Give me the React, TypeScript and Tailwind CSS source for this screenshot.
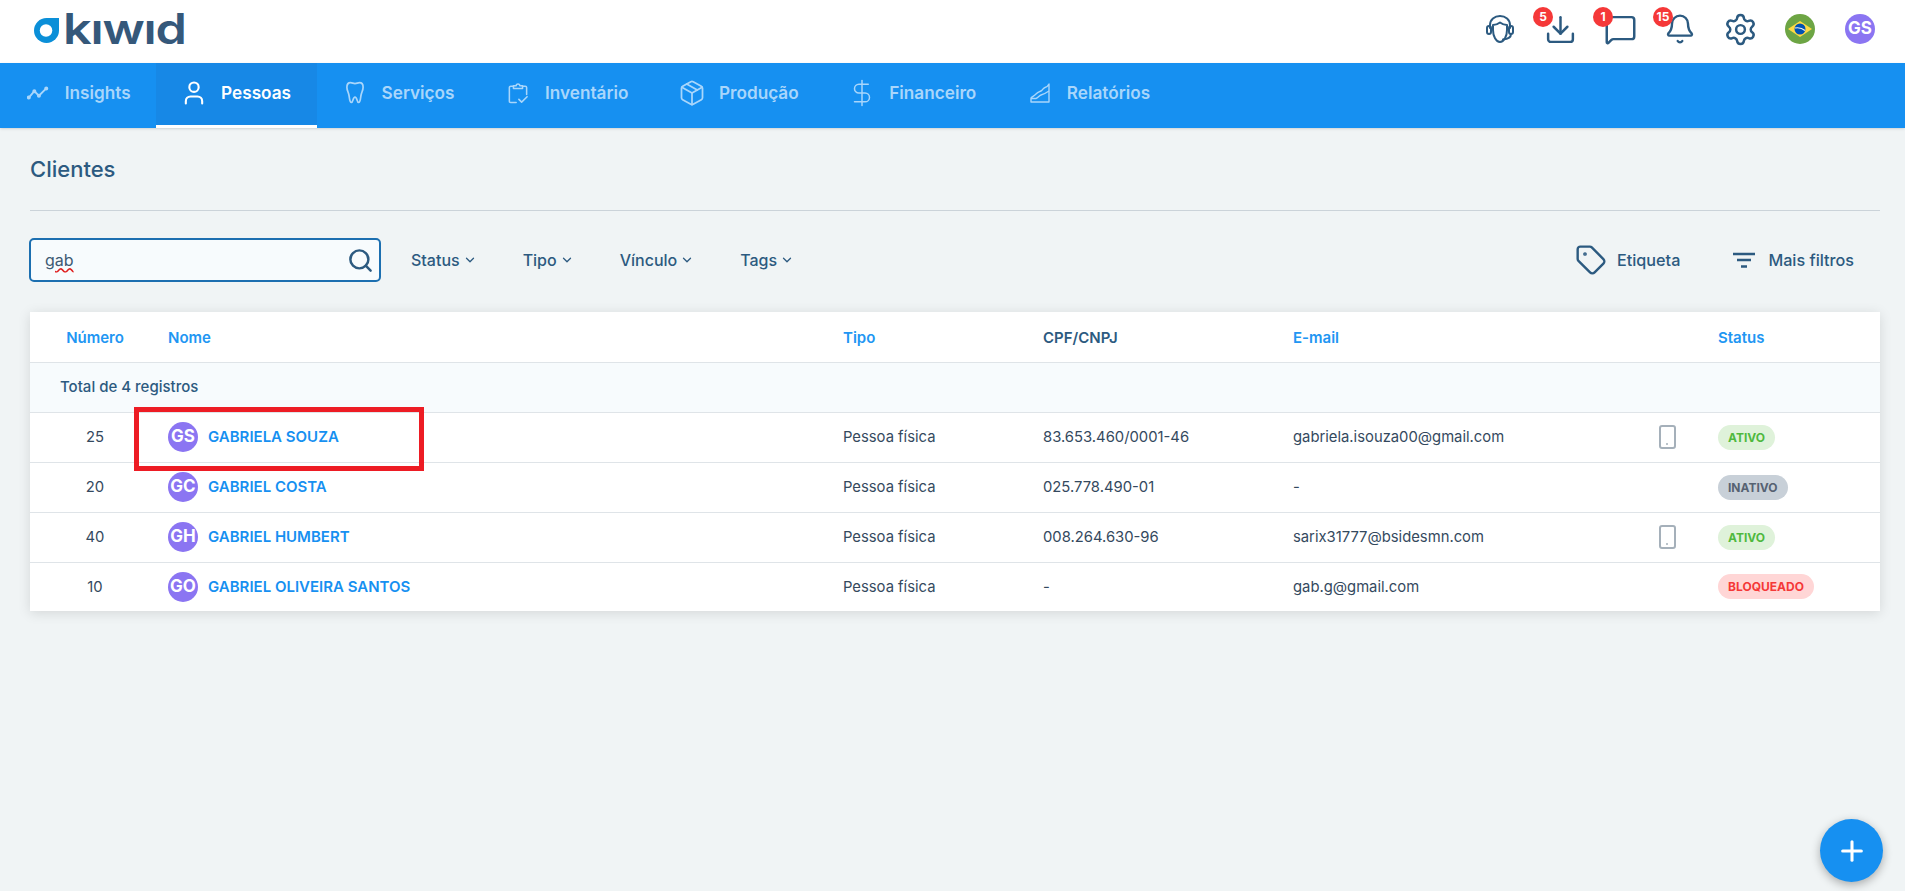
import type { ReactNode } from "react";
import { Bell, ChevronDown, DollarSign, Download, MessageSquare, Package, Plus, Search, Settings, Tag, User } from "lucide-react";

const font = { fontFamily: "Inter, sans-serif" };

function TrendIcon({ className }: { className?: string }) {
  return (
    <svg viewBox="0 0 24 16" fill="none" stroke="currentColor" strokeWidth="2" strokeLinecap="round" strokeLinejoin="round" className={className}>
      <path d="M2 13 8 6l5 5 8-8" />
      <circle cx="2" cy="13" r="1.2" fill="currentColor" />
      <circle cx="8" cy="6" r="1.2" fill="currentColor" />
      <circle cx="13" cy="11" r="1.2" fill="currentColor" />
      <circle cx="21" cy="3" r="1.2" fill="currentColor" />
    </svg>
  );
}

function ToothIcon({ className }: { className?: string }) {
  return (
    <svg viewBox="0 0 20 26" fill="none" stroke="currentColor" strokeWidth="1.9" strokeLinejoin="round" className={className}>
      <path d="M5 1.500c2 0 3 1 5 1s3-1 5-1c2.500 0 4 2 4 5 0 4-2 6-2.500 10-.3 2.500-.8 7-2.500 7-2 0-1.500-6-4-6s-2 6-4 6c-1.700 0-2.200-4.500-2.500-7C3 12.500 1 10.500 1 6.500c0-3 1.500-5 4-5Z" />
    </svg>
  );
}

function ClipboardIcon({ className }: { className?: string }) {
  return (
    <svg viewBox="0 0 22 24" fill="none" stroke="currentColor" strokeWidth="1.700" strokeLinecap="round" strokeLinejoin="round" className={className}>
      <path d="M6 4H3a1.500 1.500 0 0 0-1.500 1.500v15A1.500 1.500 0 0 0 3 22h6" />
      <path d="M16 4h3a1.500 1.500 0 0 1 1.500 1.500V13" />
      <path d="M6 6.500V3.500h3a2 2 0 0 1 4 0h3v3H6Z" />
      <path d="m12 18.500 3 3 6-6" />
    </svg>
  );
}

function ChartIcon({ className }: { className?: string }) {
  return (
    <svg viewBox="0 0 20 20" fill="none" stroke="currentColor" strokeWidth="1.400" strokeLinejoin="round" className={className}>
      <path d="M1 19h18V1c-1 2-2 3-4 3.500-2 .5-2 2.500-4 3.500-2 1-3 1-5 3-2 2-4 3-5 4v4Z" />
      <path d="M1 15.500h5c2-.5 3-3 5-3.500 3-.7 5-2 8-4" />
    </svg>
  );
}

function HeadsetIcon({ className }: { className?: string }) {
  return (
    <svg viewBox="0 0 28 28" fill="none" stroke="currentColor" strokeWidth="2" strokeLinecap="round" strokeLinejoin="round" className={className}>
      <path d="M4 13V10C4 4.500 8.500 1 14 1s10 3.500 10 9v3" />
      <path d="M7 10c3 0 5-1 7-2.500 2 1.500 4 2.500 7 2.500v5c0 6-3 12-7 12s-7-6-7-12v-5Z" />
      <rect x="1" y="11" width="4" height="8" rx="2" />
      <rect x="23" y="11" width="4" height="8" rx="2" />
      <path d="M25 19c0 3-3 5-8 5.500" />
    </svg>
  );
}

function BrazilFlag() {
  return (
    <svg viewBox="0 0 30 30" className="h-[30px] w-[30px]">
      <circle cx="15" cy="15" r="15" fill="#6da544" />
      <path d="M15 7 27 15 15 23 3 15Z" fill="#ffda44" />
      <circle cx="15" cy="15" r="5.500" fill="#0052b4" />
      <path d="M10 14c4-.8 7 0 10 2.500" stroke="#f0f0f0" strokeWidth="1.200" fill="none" />
    </svg>
  );
}

function Logo() {
  return (
    <div className="flex items-center gap-[4px]">
      <svg viewBox="0 0 26 26" className="mt-[3px] h-[25px] w-[25px]">
        <path d="M13 0H26V13A13 13 0 1 1 13 0Z" fill="#0b8fd8" />
        <circle cx="12.500" cy="13" r="6.500" fill="#fff" />
      </svg>
      <span className="origin-left scale-x-[1.2] text-[42px] leading-none font-semibold tracking-[-1px] text-[#35587a]">kıwıd</span>
    </div>
  );
}

function HeaderSlot({ badge, children }: { badge?: number; children: ReactNode }) {
  return (
    <div className="relative flex h-[30px] w-[60px] items-center justify-center">
      {badge !== undefined && (
        <span className="absolute -top-[7px] left-[3px] z-10 flex h-5 w-5 items-center justify-center rounded-full bg-[#f53838] text-xs font-bold text-white">
          {badge}
        </span>
      )}
      {children}
    </div>
  );
}

const tabs = [
  { label: "Insights", icon: <TrendIcon className="h-4 w-[22px]" /> },
  { label: "Pessoas", icon: <User className="h-7 w-7 shrink-0" strokeWidth={1.800} />, active: true },
  { label: "Serviços", icon: <ToothIcon className="h-[24px] w-[18px]" /> },
  { label: "Inventário", icon: <ClipboardIcon className="h-[23px] w-[20px]" /> },
  { label: "Produção", icon: <Package className="h-7 w-7 shrink-0" strokeWidth={1.500} /> },
  { label: "Financeiro", icon: <DollarSign className="h-[30px] w-[30px] shrink-0" strokeWidth={1.200} /> },
  { label: "Relatórios", icon: <ChartIcon className="h-5 w-5" /> },
];

const clients = [
  { id: 25, initials: "GS", name: "GABRIELA SOUZA", doc: "83.653.460/0001-46", email: "gabriela.isouza00@gmail.com", phone: true, status: "ATIVO" },
  { id: 20, initials: "GC", name: "GABRIEL COSTA", doc: "025.778.490-01", email: "-", phone: false, status: "INATIVO" },
  { id: 40, initials: "GH", name: "GABRIEL HUMBERT", doc: "008.264.630-96", email: "sarix31777@bsidesmn.com", phone: true, status: "ATIVO" },
  { id: 10, initials: "GO", name: "GABRIEL OLIVEIRA SANTOS", doc: "-", email: "gab.g@gmail.com", phone: false, status: "BLOQUEADO" },
];

const statusClass: Record<string, string> = {
  ATIVO: "bg-[#dff2da] text-[#4fb93f]",
  INATIVO: "bg-[#c8d0d8] text-[#566272]",
  BLOQUEADO: "bg-[#ffd6d6] text-[#f53838]",
};

export default function App() {
  return (
    <div style={font} className="relative min-h-[891px] overflow-hidden bg-[#f0f4f5] text-[#2c5a80]">
      <header className="flex h-[63px] items-center justify-between bg-white pr-[15px] pb-[5px] pl-[34px]">
        <Logo />
        <div className="flex items-center">
          <HeaderSlot><HeadsetIcon className="h-[28px] w-[28px]" /></HeaderSlot>
          <HeaderSlot badge={5}><Download className="h-[33px] w-[33px] shrink-0" strokeWidth={1.800} /></HeaderSlot>
          <HeaderSlot badge={1}><MessageSquare className="h-[33px] w-[33px] shrink-0" strokeWidth={1.800} /></HeaderSlot>
          <HeaderSlot badge={15}><Bell className="h-8 w-8 shrink-0" strokeWidth={1.800} /></HeaderSlot>
          <HeaderSlot><Settings className="h-[35px] w-[35px] shrink-0" strokeWidth={1.700} /></HeaderSlot>
          <HeaderSlot><BrazilFlag /></HeaderSlot>
          <HeaderSlot>
            <span className="flex h-[30px] w-[30px] items-center justify-center rounded-full bg-[#8b75f2] text-[17px] font-bold text-white">GS</span>
          </HeaderSlot>
        </div>
      </header>

      <nav className="flex h-[65px] bg-[#1690f1] shadow-sm">
        {tabs.map((t) => (
          <a
            key={t.label}
            className={
              t.active
                ? "flex items-center gap-[15px] border-b-[3px] border-white bg-[#1788e6] px-[25.75px] pb-[2px] text-[17.2px] font-semibold text-white"
                : "flex items-center gap-[15px] px-[25.75px] pb-[5px] text-[17.2px] font-semibold text-[#a9d6fb]"
            }
          >
            <span className="flex w-6 justify-center">{t.icon}</span>
            {t.label}
          </a>
        ))}
      </nav>

      <main className="pr-[25px] pl-[30px]">
        <h1 className="flex h-[83px] items-center border-b border-[#cbd3d9] text-[22px] font-medium text-[#2c5a80]">Clientes</h1>

        <div className="mt-[27px] flex h-[44px] items-center justify-between">
          <div className="flex items-center">
            <div className="-ml-px flex h-[44px] w-[352px] items-center justify-between rounded-[5px] border-2 border-[#1c6fb0] bg-[#f7fbfd] pr-[5px] pl-[14px]">
              <span className="text-base text-[#3d5a73] underline decoration-[#e02020] decoration-wavy">gab</span>
              <Search className="h-[27px] w-[27px]" strokeWidth={2.200} />
            </div>
            <div className="ml-[30px] flex items-center gap-[46px] text-base font-medium">
              {["Status", "Tipo", "Vínculo", "Tags"].map((f) => (
                <span key={f} className="flex items-center gap-[3px]">
                  {f}
                  <ChevronDown className="h-3.5 w-3.5" strokeWidth={2.200} />
                </span>
              ))}
            </div>
          </div>
          <div className="flex items-center gap-[52px] pr-[26px] text-[16.2px] font-medium">
            <span className="flex items-center gap-[10px]"><Tag className="h-8 w-8" strokeWidth={1.800} />Etiqueta</span>
            <span className="flex items-center gap-[12px]">
              <svg viewBox="0 0 24 16" className="h-4 w-6" fill="none" stroke="currentColor" strokeWidth="2.500">
                <path d="M1 2h22M5 8h14M9 14.500h6" />
              </svg>
              Mais filtros
            </span>
          </div>
        </div>

        <div className="mt-[30px] bg-white shadow-[0_2px_12px_rgba(0,0,0,0.12)]">
          <table className="w-full table-fixed border-collapse text-[14.8px]">
            <colgroup>
              <col className="w-[130px]" />
              <col className="w-[683px]" />
              <col className="w-[200px]" />
              <col className="w-[250px]" />
              <col className="w-[355px]" />
              <col className="w-[70px]" />
              <col />
            </colgroup>
            <thead>
              <tr className="h-[50px] border-b border-[#dfe4e8] text-left text-[15px] text-[#2196f3]">
                <th className="pt-[3px] text-center font-semibold">Número</th>
                <th className="pt-[3px] pl-2 font-semibold">Nome</th>
                <th className="pt-[3px] font-semibold">Tipo</th>
                <th className="pt-[3px] font-semibold text-[#2c5a80]">CPF/CNPJ</th>
                <th className="pt-[3px] font-semibold">E-mail</th>
                <th />
                <th className="pt-[3px] font-semibold">Status</th>
              </tr>
            </thead>
            <tbody>
              <tr className="h-[50px] border-b border-[#dfe4e8] bg-[#f7fbfd]">
                <td colSpan={7} className="pt-px pl-[30px] text-[15px] font-medium">Total de 4 registros</td>
              </tr>
              {clients.map((c) => (
                <tr key={c.id} className="h-[50px] border-b border-[#dfe4e8] text-[#34495e] last:h-[49px] last:border-b-0">
                  <td className="text-center">{c.id}</td>
                  <td className="pl-2">
                    <div className="flex items-center gap-[10px]">
                      <span className="flex h-[30px] w-[30px] items-center justify-center rounded-full bg-[#8b75f2] text-[17px] font-bold text-white">{c.initials}</span>
                      <span className="text-[15px] font-semibold text-[#1690f1]">{c.name}</span>
                    </div>
                  </td>
                  <td>Pessoa física</td>
                  <td>{c.doc}</td>
                  <td>{c.email}</td>
                  <td className="pl-[11px]">
                    {c.phone && (
                      <span className="relative block h-[24px] w-[17px] rounded-[3px] border-2 border-[#a5b0ba]">
                        <span className="absolute bottom-[2px] left-[5px] h-[2px] w-[2px] rounded-full bg-[#a5b0ba]" />
                      </span>
                    )}
                  </td>
                  <td>
                    <span className={`inline-block rounded-full px-[10px] py-[5px] text-xs leading-[15px] font-bold ${statusClass[c.status]}`}>{c.status}</span>
                  </td>
                </tr>
              ))}
            </tbody>
          </table>
        </div>
      </main>

      <div className="pointer-events-none absolute top-[407px] left-[134px] h-[64px] w-[290px] border-[5px] border-[#ed1c24]" />

      <button className="absolute right-[22px] bottom-[9px] flex h-[63px] w-[63px] items-center justify-center rounded-full bg-[#1690f1] text-white shadow-[0_3px_10px_rgba(0,0,0,0.3)]">
        <Plus className="h-8 w-8" strokeWidth={2.300} />
      </button>
    </div>
  );
}
